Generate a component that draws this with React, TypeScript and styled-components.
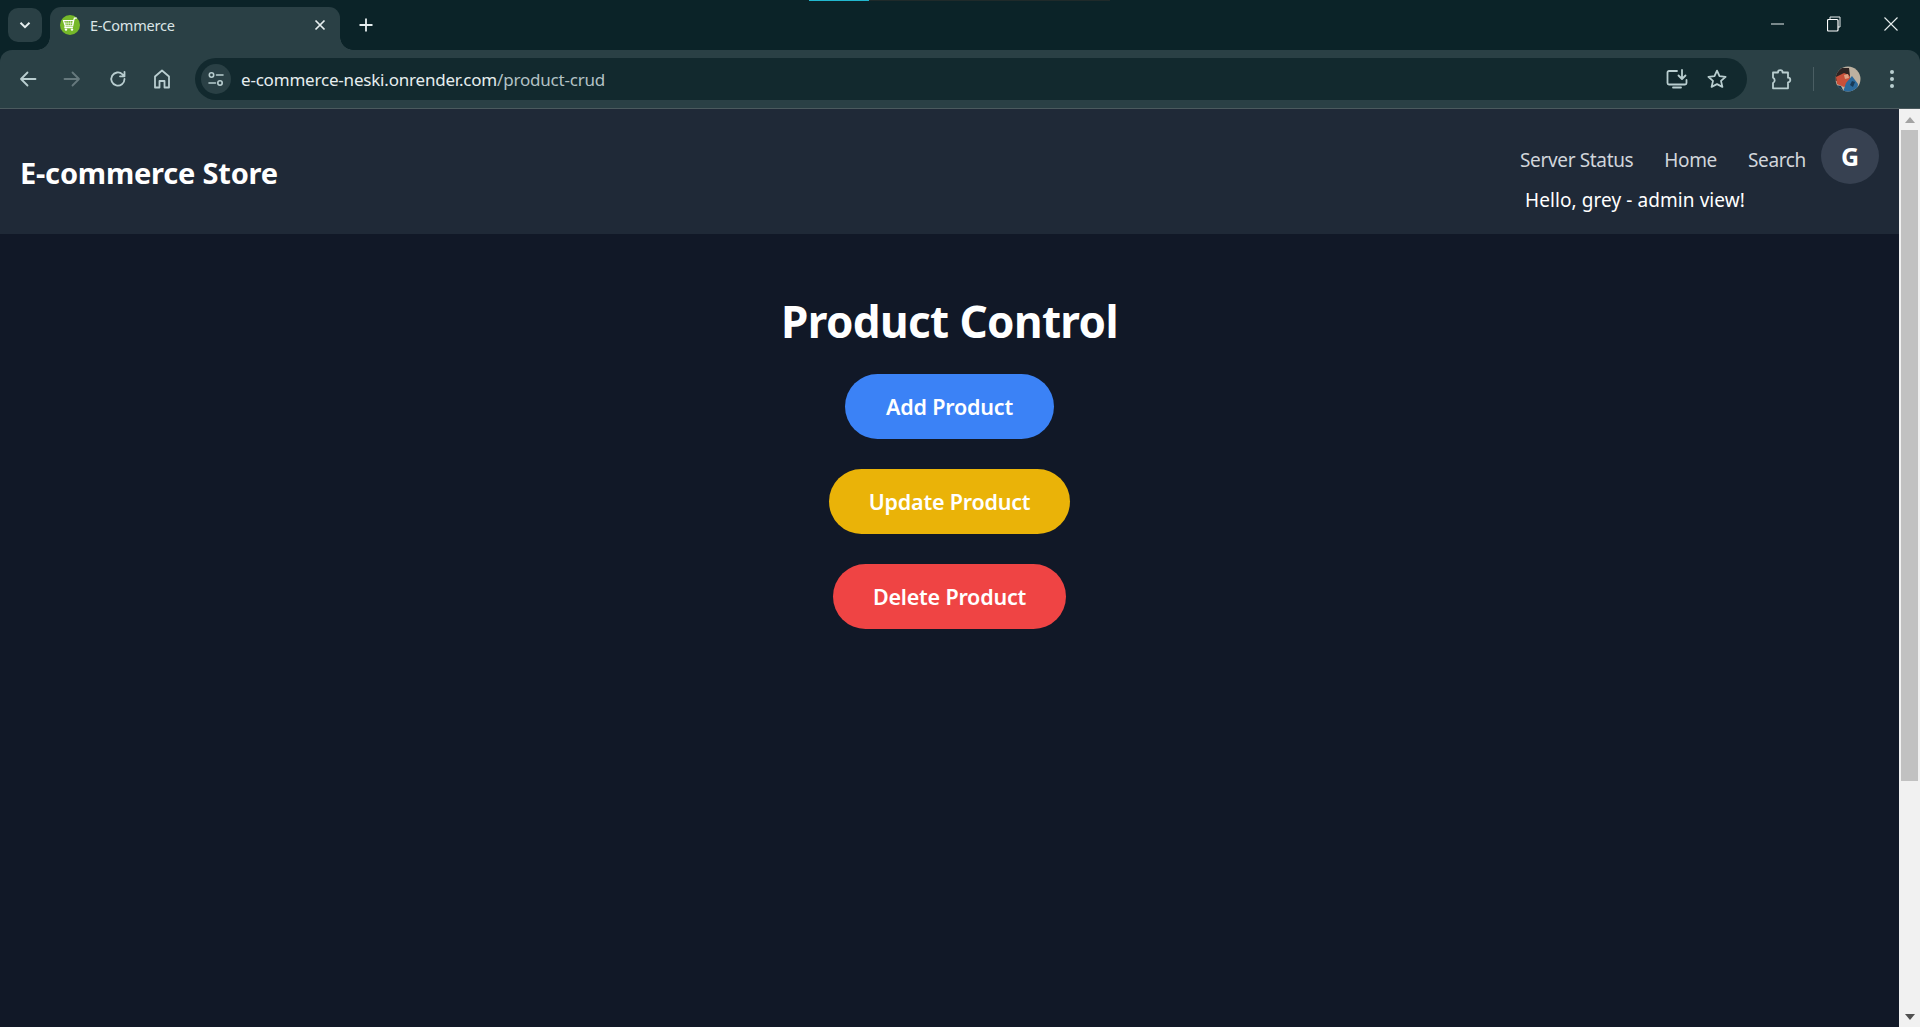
import React from "react";
import styled, { createGlobalStyle } from "styled-components";

const Global = createGlobalStyle`
  html, body { margin: 0; height: 100%; overflow: hidden; background: #111827; }
  #root { height: 100%; }
  * { box-sizing: border-box; }
`;

const Shell = styled.div`
  position: relative;
  display: flex;
  flex-direction: column;
  width: 1920px;
  height: 1027px;
  font-family: "Noto Sans", "Open Sans", sans-serif;
  background: #0b2328;
`;

const LoadBar = styled.div<{ $left: number; $width: number; $color: string }>`
  position: absolute;
  top: 0;
  left: ${(p) => p.$left}px;
  width: ${(p) => p.$width}px;
  height: 1px;
  background: ${(p) => p.$color};
`;

const TabStrip = styled.div`
  display: flex;
  align-items: flex-end;
  height: 50px;
  padding-left: 8px;
  color: #d5e0e2;
`;

const TabSearch = styled.div`
  display: flex;
  align-items: center;
  justify-content: center;
  width: 34px;
  height: 34px;
  margin-bottom: 8px;
  border-radius: 10px;
  background: #2a4045;
`;

const Tab = styled.div`
  position: relative;
  display: flex;
  align-items: center;
  width: 290px;
  height: 43px;
  margin-left: 8px;
  padding: 0 14px 7px 10px;
  border-radius: 11px 11px 0 0;
  background: #2a4045;
  &::before, &::after {
    content: "";
    position: absolute;
    bottom: 0;
    width: 13px;
    height: 13px;
  }
  &::before { left: -13px; background: radial-gradient(circle at 0 0, transparent 12.5px, #2a4045 13px); }
  &::after { right: -13px; background: radial-gradient(circle at 100% 0, transparent 12.5px, #2a4045 13px); }
`;

const Favicon = styled.svg`
  flex: none;
`;

const TabTitle = styled.span`
  flex: 1;
  margin-left: 10px;
  font-size: 14.5px;
  letter-spacing: -0.2px;
  color: #dbe5e6;
`;

const NewTab = styled.div`
  display: flex;
  align-items: center;
  justify-content: center;
  width: 24px;
  height: 24px;
  margin: 0 0 13px 14px;
`;

const WindowControls = styled.div`
  display: flex;
  margin-left: auto;
  align-self: stretch;
`;

const WindowButton = styled.div<{ $w?: number }>`
  display: flex;
  align-items: center;
  justify-content: center;
  width: ${(p) => p.$w ?? 56}px;
  height: 48px;
`;

const Toolbar = styled.div`
  display: flex;
  align-items: center;
  height: 59px;
  padding: 0 0 1px 10px;
  border-radius: 12px 12px 0 0;
  border-bottom: 1px solid #4b5a5e;
  background: #2a4045;
`;

const NavIcon = styled.div<{ $gap?: number; $ml?: number }>`
  display: flex;
  align-items: center;
  justify-content: center;
  width: 36px;
  height: 36px;
  margin-left: ${(p) => p.$ml ?? 0}px;
  margin-right: ${(p) => p.$gap ?? 8}px;
  flex: none;
`;

const Omnibox = styled.div`
  display: flex;
  align-items: center;
  width: 1552px;
  height: 42px;
  padding: 0 16px 0 6px;
  border-radius: 21px;
  background: #12292e;
  flex: none;
`;

const SiteChip = styled.div`
  display: flex;
  align-items: center;
  justify-content: center;
  width: 30px;
  height: 30px;
  border-radius: 50%;
  background: #2a4045;
  flex: none;
`;

const Url = styled.div`
  flex: 1;
  margin: 1px 0 0 10px;
  font-size: 17px;
  letter-spacing: -0.2px;
  color: #e6eeef;
`;

const UrlPath = styled.span`
  color: #b3c2c5;
`;

const OmniIcon = styled.div`
  display: flex;
  align-items: center;
  justify-content: center;
  width: 28px;
  height: 28px;
  margin-left: 12px;
`;

const Separator = styled.div`
  width: 1px;
  height: 24px;
  margin: 0 21px 0 14px;
  background: #4a5e63;
  flex: none;
`;

const Content = styled.div`
  display: flex;
  flex: 1;
  min-height: 0;
`;

const Page = styled.div`
  display: flex;
  flex-direction: column;
  flex: 1;
  min-width: 0;
  background: #111827;
`;

const Header = styled.header`
  display: flex;
  align-items: center;
  justify-content: space-between;
  height: 125px;
  padding: 0 20px;
  background: #1f2937;
`;

const Logo = styled.div`
  margin-top: 2px;
  font-size: 29px;
  font-weight: 700;
  letter-spacing: -0.2px;
  color: #fff;
`;

const HeaderRight = styled.div`
  display: flex;
  flex-direction: column;
  align-items: flex-start;
  margin-top: -2px;
`;

const NavRow = styled.nav`
  display: flex;
  align-items: center;
`;

const NavLink = styled.a<{ $mr: number }>`
  margin-right: ${(p) => p.$mr}px;
  padding-top: 7px;
  font-size: 19px;
  letter-spacing: -0.35px;
  color: #d1d5db;
`;

const Avatar = styled.div`
  display: flex;
  align-items: center;
  justify-content: center;
  width: 58px;
  height: 56px;
  border-radius: 50%;
  background: #374151;
  font-size: 25px;
  font-weight: 700;
  color: #fff;
`;

const Greeting = styled.div`
  margin: 3px 0 0 5px;
  font-size: 19px;
  letter-spacing: 0.08px;
  color: #fff;
`;

const Main = styled.main`
  display: flex;
  flex-direction: column;
  align-items: center;
  padding-top: 57px;
`;

const Title = styled.h1`
  margin: 0 0 23px;
  font-size: 44px;
  line-height: 60px;
  font-weight: 700;
  letter-spacing: -0.62px;
  color: #fff;
`;

const ActionList = styled.div`
  display: flex;
  flex-direction: column;
  align-items: center;
  gap: 30px;
`;

const ActionButton = styled.button<{ $w: number; $bg: string }>`
  height: 65px;
  width: ${(p) => p.$w}px;
  border: 0;
  border-radius: 33px;
  background: ${(p) => p.$bg};
  color: #fff;
  font-family: inherit;
  font-size: 21.5px;
  font-weight: 600;
  letter-spacing: -0.2px;
`;

const ScrollTrack = styled.div`
  display: flex;
  flex-direction: column;
  align-items: center;
  width: 21px;
  background: #f1f1f1;
  flex: none;
`;

const ScrollArrow = styled.div`
  display: flex;
  align-items: center;
  justify-content: center;
  width: 100%;
  height: 21px;
  flex: none;
`;

const ScrollThumb = styled.div`
  width: 17px;
  height: 651px;
  background: #c1c1c1;
  flex: none;
`;

const ScrollSpace = styled.div`
  flex: 1;
`;

const stroke = { fill: "none", stroke: "#b9ced0", strokeWidth: 1.8, strokeLinecap: "round" as const, strokeLinejoin: "round" as const };

const App = () => (
  <Shell>
    <Global />
    <LoadBar $left={809} $width={60} $color="#22b8cf" />
    <LoadBar $left={869} $width={241} $color="#1f2a2a" />
    <TabStrip>
      <TabSearch>
        <svg width="14" height="14" viewBox="0 0 14 14"><path d="M2.5 4.8 7 9.2l4.5-4.4" fill="none" stroke="#e6eeef" strokeWidth="2" /></svg>
      </TabSearch>
      <Tab>
        <Favicon width="20" height="20" viewBox="0 0 20 20">
          <circle cx="10" cy="10" r="10" fill="#76b82a" />
          <path d="M3.500 5.500h10.200l-1 5.400H5.200zM13.700 5.500l.7-2.300h2.400M5.200 10.900l-.3 1.800h8" fill="none" stroke="#fff" strokeWidth="1.2" />
          <path d="M6 6.200v4M8.200 6.200v4M10.400 6.200v4M12.400 6.200v4M4.300 8.200h9" stroke="#fff" strokeWidth=".6" />
          <circle cx="6" cy="14.600" r="1.200" fill="#fff" /><circle cx="12" cy="14.600" r="1.200" fill="#fff" />
        </Favicon>
        <TabTitle>E-Commerce</TabTitle>
        <svg width="12" height="12" viewBox="0 0 12 12"><path d="M1.500 1.500l9 9M10.500 1.500l-9 9" stroke="#e6eeef" strokeWidth="1.700" /></svg>
      </Tab>
      <NewTab>
        <svg width="14" height="14" viewBox="0 0 14 14"><path d="M7 .5v13M.5 7h13" stroke="#e6eeef" strokeWidth="1.800" /></svg>
      </NewTab>
      <WindowControls>
        <WindowButton>
          <svg width="14" height="2" viewBox="0 0 14 2"><path d="M0 1h13" stroke="#e8eeee" strokeWidth="1" /></svg>
        </WindowButton>
        <WindowButton>
          <svg width="14" height="16" viewBox="0 0 14 16"><path d="M3 3V1h10v10h-2" fill="none" stroke="#e8eeee" /><rect x=".5" y="3.500" width="10.500" height="11.500" rx="1" fill="none" stroke="#fff" strokeWidth="1.200" /></svg>
        </WindowButton>
        <WindowButton $w={58}>
          <svg width="14" height="14" viewBox="0 0 14 14"><path d="M.5.5l13 13M13.500.5l-13 13" stroke="#e8eeee" strokeWidth="1.100" /></svg>
        </WindowButton>
      </WindowControls>
    </TabStrip>
    <Toolbar>
      <NavIcon>
        <svg width="20" height="20" viewBox="0 0 20 20"><path d="M17.500 10H3M9.500 3.500 3 10l6.500 6.500" {...stroke} /></svg>
      </NavIcon>
      <NavIcon $gap={10}>
        <svg width="20" height="20" viewBox="0 0 20 20"><path d="M2.500 10H17M10.500 3.500 17 10l-6.500 6.500" {...stroke} stroke="#66797d" /></svg>
      </NavIcon>
      <NavIcon>
        <svg width="20" height="20" viewBox="0 0 20 20"><path d="M16.500 10a6.600 6.600 0 1 1-2-4.700l2 2M16.500 2.800v4.500H12" {...stroke} /></svg>
      </NavIcon>
      <NavIcon $gap={15}>
        <svg width="20" height="22" viewBox="0 0 20 22"><path d="M3 19.500V8.500L10 2.500l7 6v11h-4.500v-6.500h-5v6.500z" {...stroke} /></svg>
      </NavIcon>
      <Omnibox>
        <SiteChip>
          <svg width="18" height="18" viewBox="0 0 18 18"><circle cx="4.500" cy="5" r="2.200" {...stroke} strokeWidth="1.600" /><path d="M9.500 5h6.500M2 13h6.500" {...stroke} strokeWidth="1.600" /><circle cx="13" cy="13" r="2.200" {...stroke} strokeWidth="1.600" /></svg>
        </SiteChip>
        <Url>e-commerce-neski.onrender.com<UrlPath>/product-crud</UrlPath></Url>
        <OmniIcon>
          <svg width="24" height="24" viewBox="0 0 24 24"><path d="M12 4H4a1.500 1.500 0 0 0-1.500 1.500V16A1.500 1.500 0 0 0 4 17.500h16a1.500 1.500 0 0 0 1.500-1.500v-3M17 3v8.500M13.500 8.500 17 12l3.500-3.500M8 20.500h8" {...stroke} /></svg>
        </OmniIcon>
        <OmniIcon>
          <svg width="22" height="22" viewBox="0 0 22 22"><path d="m11 2.600 2.500 5.600 6.100.6-4.600 4.100 1.400 6L11 16.100l-5.400 2.800 1.400-6-4.600-4.100 6.100-.6z" {...stroke} /></svg>
        </OmniIcon>
      </Omnibox>
      <NavIcon $gap={0} $ml={16}>
        <svg width="24" height="24" viewBox="0 0 24 24"><path d="M4 5.500h5a2.300 2.300 0 1 1 4.600 0H19v5.200a2.300 2.300 0 0 1 0 4.600v6H4v-5.300a3 3 0 0 0 0-5.400z" {...stroke} /></svg>
      </NavIcon>
      <Separator />
      <Favicon width="26" height="26" viewBox="0 0 26 26">
        <defs><clipPath id="face"><circle cx="13" cy="13" r="12.500" /></clipPath></defs>
        <g clipPath="url(#face)">
          <rect width="26" height="26" fill="#bdb1a0" />
          <path d="M0 8l6-6h8l1 8-4 4-11 1z" fill="#2f2423" />
          <path d="M1 11l8-4 5 2 3 8-8 4-7-3z" fill="#c9503a" />
          <path d="M9 9l4-1 1 4-4 1z" fill="#e0a083" />
          <path d="M11 17l6-7 6 8-1 8H8z" fill="#2b6a9c" />
          <path d="M0 19l6 1 3 6H0zM17 15l3 1-2 5-3-2z" fill="#173a57" />
        </g>
      </Favicon>
      <NavIcon $gap={0} $ml={13}>
        <svg width="6" height="20" viewBox="0 0 6 20"><circle cx="3" cy="3" r="2" fill="#b9ced0" /><circle cx="3" cy="10" r="2" fill="#b9ced0" /><circle cx="3" cy="17" r="2" fill="#b9ced0" /></svg>
      </NavIcon>
    </Toolbar>
    <Content>
      <Page>
        <Header>
          <Logo>E-commerce Store</Logo>
          <HeaderRight>
            <NavRow>
              <NavLink $mr={31}>Server Status</NavLink>
              <NavLink $mr={31}>Home</NavLink>
              <NavLink $mr={15}>Search</NavLink>
              <Avatar>G</Avatar>
            </NavRow>
            <Greeting>Hello, grey - admin view!</Greeting>
          </HeaderRight>
        </Header>
        <Main>
          <Title>Product Control</Title>
          <ActionList>
            <ActionButton $w={209} $bg="#3b82f6">Add Product</ActionButton>
            <ActionButton $w={241} $bg="#eab308">Update Product</ActionButton>
            <ActionButton $w={233} $bg="#ef4444">Delete Product</ActionButton>
          </ActionList>
        </Main>
      </Page>
      <ScrollTrack>
        <ScrollArrow>
          <svg width="10" height="6" viewBox="0 0 10 6"><path d="M5 0l5 6H0z" fill="#a3a3a3" /></svg>
        </ScrollArrow>
        <ScrollThumb />
        <ScrollSpace />
        <ScrollArrow>
          <svg width="10" height="6" viewBox="0 0 10 6"><path d="M5 6l5-6H0z" fill="#505050" /></svg>
        </ScrollArrow>
      </ScrollTrack>
    </Content>
  </Shell>
);

export default App;
